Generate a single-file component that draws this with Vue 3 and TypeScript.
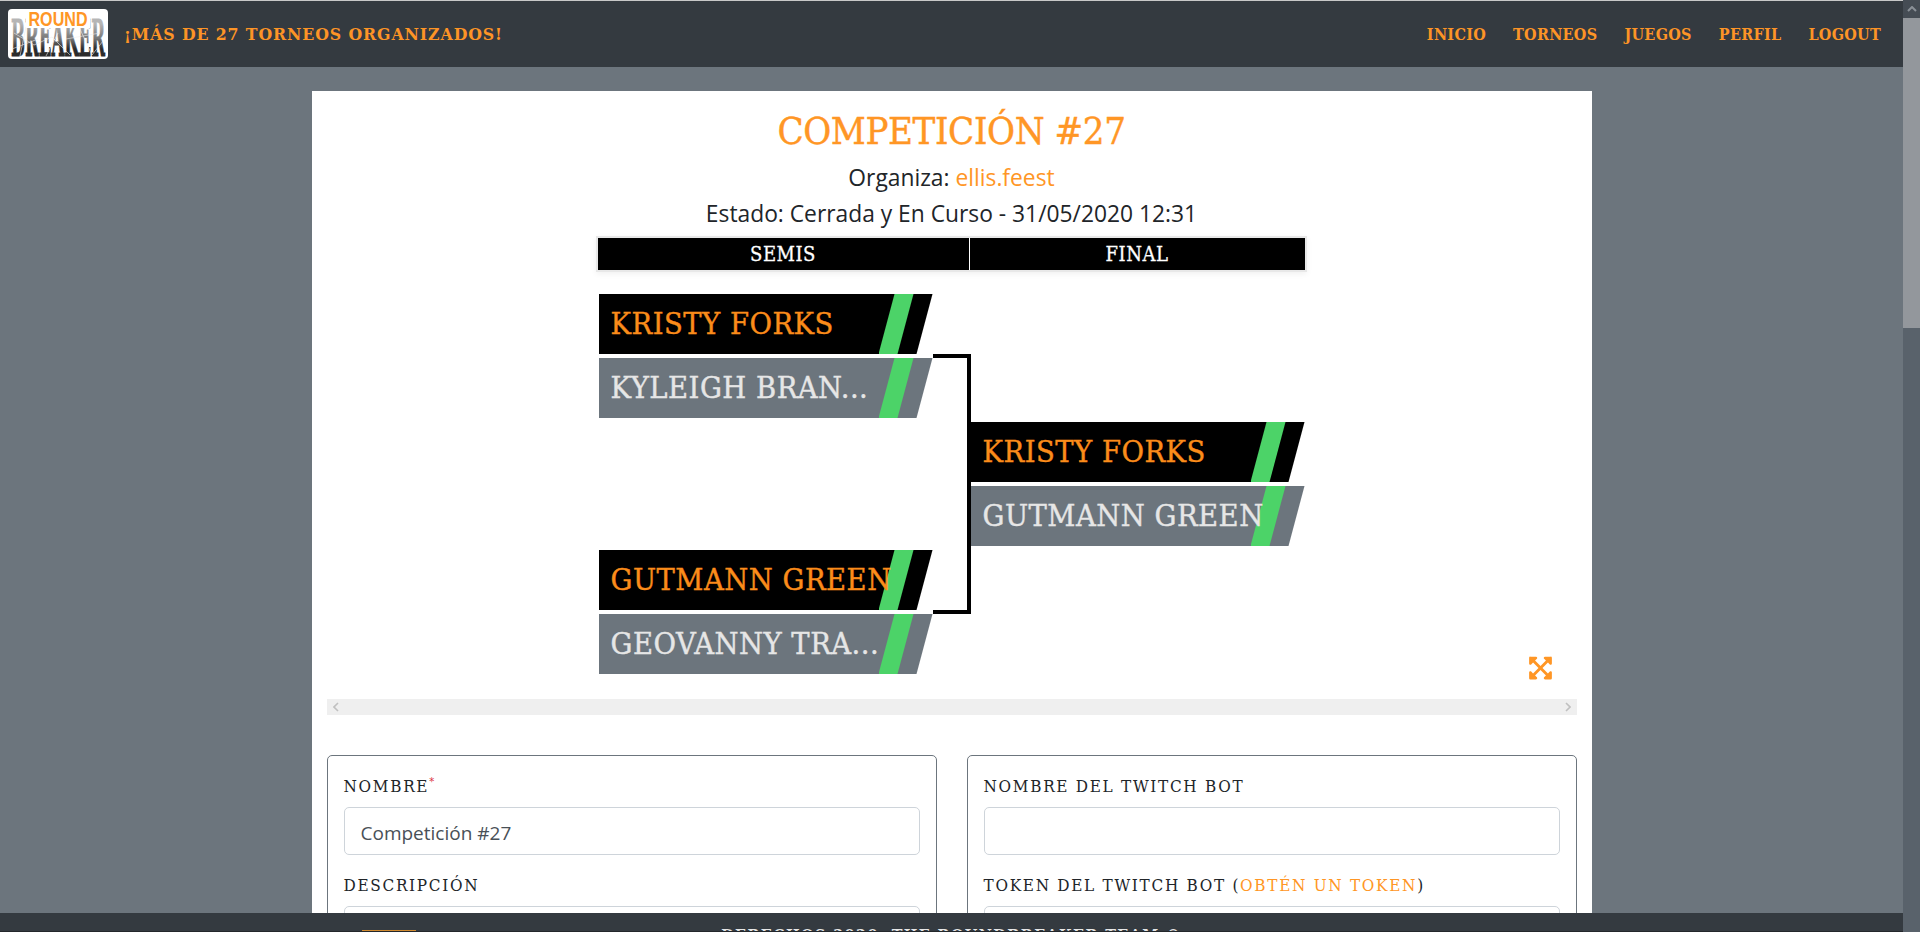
<script setup lang="ts">
interface Player {
  name: string
  winner?: boolean
}

const navItems = ['Inicio', 'Torneos', 'Juegos', 'Perfil', 'Logout']

const semis: Player[][] = [
  [{ name: 'Kristy Forks', winner: true }, { name: 'Kyleigh Bran...' }],
  [{ name: 'Gutmann Green', winner: true }, { name: 'Geovanny Tra...' }],
]

const final: Player[] = [{ name: 'Kristy Forks', winner: true }, { name: 'Gutmann Green' }]
</script>

<template>
  <div class="page">
    <header class="navbar">
      <div class="brand">
        <svg class="logo" viewBox="0 0 100 50">
          <defs>
            <linearGradient id="crack" x1="0" y1="0" x2="0" y2="1">
              <stop offset="0.25" stop-color="#b5b5b5" />
              <stop offset="0.5" stop-color="#777" />
              <stop offset="0.68" stop-color="#2a2a2a" />
              <stop offset="1" stop-color="#303030" />
            </linearGradient>
          </defs>
          <text class="logo-break" x="3" y="47" textLength="94" lengthAdjust="spacingAndGlyphs" fill="url(#crack)" stroke="url(#crack)">BREAKER</text>
          <path d="M6 24 L26 36 L44 28 L62 46 M18 18 L12 47 M50 24 L38 47 M72 20 L84 46 L95 32 M58 30 L92 24 M4 40 L30 30" stroke="#eee" stroke-width="0.6" fill="none" />
          <rect x="18" y="1" width="64" height="18" fill="#fff" />
          <text class="logo-round" x="20.5" y="17" textLength="59" lengthAdjust="spacingAndGlyphs">ROUND</text>
        </svg>
        <span class="tagline">¡Más de 27 torneos organizados!</span>
      </div>
      <nav class="nav">
        <a v-for="item in navItems" :key="item" class="nav-link">{{ item }}</a>
      </nav>
    </header>

    <main class="card">
      <h1 class="title">Competición #27</h1>
      <p class="meta">Organiza: <a class="link">ellis.feest</a></p>
      <p class="meta">Estado: Cerrada y En Curso - 31/05/2020 12:31</p>

      <section class="bracket-wrap">
        <div class="rounds">
          <div class="round-head semis-head">Semis</div>
          <div class="round-head final-head">Final</div>
        </div>
        <div class="bracket">
          <div class="col-semis">
            <div v-for="(pair, i) in semis" :key="i" class="pair">
              <div
                v-for="p in pair"
                :key="p.name"
                class="player"
                :class="{ winner: p.winner }"
              >
                <span class="player-name">{{ p.name }}</span>
                <i class="stripe"></i>
              </div>
            </div>
            <div class="connector"></div>
          </div>
          <div class="col-final">
            <div class="pair">
              <div
                v-for="p in final"
                :key="p.name"
                class="player"
                :class="{ winner: p.winner }"
              >
                <span class="player-name">{{ p.name }}</span>
                <i class="stripe"></i>
              </div>
            </div>
          </div>
        </div>
        <svg class="expand" viewBox="0 0 448 512">
          <path d="M448 344v112a23.94 23.94 0 0 1-24 24H312c-21.39 0-32.09-25.9-17-41l36.2-36.2L224 295.6 116.77 402.9 153 439c15.09 15.1 4.39 41-17 41H24a23.94 23.94 0 0 1-24-24V344c0-21.4 25.89-32.1 41-17l36.19 36.2L184.46 256 77.18 148.7 41 185c-15.1 15.1-41 4.4-41-17V56a23.94 23.94 0 0 1 24-24h112c21.39 0 32.09 25.9 17 41l-36.2 36.2L224 216.4l107.23-107.3L295 73c-15.09-15.1-4.39-41 17-41h112a23.94 23.94 0 0 1 24 24v112c0 21.4-25.89 32.1-41 17l-36.19-36.2L263.54 256l107.28 107.3L407 327.1c15.1-15.2 41-4.5 41 16.9z" />
        </svg>
        <div class="hscroll">
          <svg viewBox="0 0 6 10"><path d="M5 1 1 5l4 4" /></svg>
          <svg viewBox="0 0 6 10"><path d="M1 1l4 4-4 4" /></svg>
        </div>
      </section>

      <section class="forms">
        <div class="panel">
          <label class="field-label">Nombre<sup class="req">*</sup></label>
          <input class="input" value="Competición #27" />
          <label class="field-label">Descripción</label>
          <input class="input" />
        </div>
        <div class="panel">
          <label class="field-label">Nombre del Twitch Bot</label>
          <input class="input" />
          <label class="field-label">Token del Twitch Bot (<a class="link">Obtén un token</a>)</label>
          <input class="input" />
        </div>
      </section>
    </main>

    <footer class="footer">
      <span class="footer-badge"></span>
      <span class="footer-text">Derechos 2020. The RoundBreaker Team ©</span>
    </footer>

    <div class="vscroll">
      <div class="vscroll-btn">
        <svg viewBox="0 0 10 6"><path d="M1 5l4-4 4 4" /></svg>
      </div>
      <div class="vscroll-thumb"></div>
    </div>
  </div>
</template>

<style>
html,
body {
  margin: 0;
  height: 932px;
  overflow: hidden;
  background: #6c757d;
}
</style>

<style scoped>
.page {
  position: relative;
  height: 932px;
  overflow: hidden;
  padding-right: 17px;
  box-sizing: border-box;
  background: #6c757d;
  font-family: 'Open Sans', 'Noto Sans', sans-serif;
  color: #212529;
}

.navbar {
  height: 66px;
  margin-top: 1px;
  display: flex;
  align-items: center;
  justify-content: space-between;
  padding: 0 22px 0 8px;
  background: #343a40;
  box-shadow: 0 -1px 0 #c8c8c8;
}

.brand {
  display: flex;
  align-items: center;
  gap: 16px;
}

.logo {
  width: 100px;
  height: 50px;
  background: #fff;
  border-radius: 4px;
}

.logo-round {
  font: 700 19.5px 'Liberation Sans', sans-serif;
  fill: #ff9625;
}

.logo-break {
  font: 700 50px 'DejaVu Serif', serif;
  stroke-width: 0.8;
}

.tagline,
.nav-link {
  font-family: 'DejaVu Serif Condensed', 'DejaVu Serif', serif;
  font-stretch: condensed;
  font-weight: 700;
  text-transform: uppercase;
  color: #fd9426;
}

.tagline {
  font-size: 17.5px;
  letter-spacing: 0.9px;
}

.nav {
  display: flex;
  gap: 27px;
}

.nav-link {
  font-size: 16px;
  letter-spacing: 0.3px;
}

.card {
  width: 1280px;
  margin: 24px auto 0;
  padding: 0 15px;
  box-sizing: border-box;
  background: #fff;
  text-align: center;
  height: 900px;
}

.title {
  margin: 0 0 3px;
  padding-top: 14px;
  font-family: 'DejaVu Serif Condensed', 'DejaVu Serif', serif;
  font-stretch: condensed;
  font-size: 38px;
  font-weight: 400;
  line-height: 52px;
  letter-spacing: -0.4px;
  -webkit-text-stroke: 0.4px #ff9625;
  text-transform: uppercase;
  color: #ff9625;
}

.meta {
  margin: 0;
  font-size: 22.8px;
  line-height: 36px;
}

.link {
  color: #ff9625;
}

.bracket-wrap {
  position: relative;
  margin-top: 4px;
}

.rounds {
  display: flex;
  width: 711px;
  height: 36px;
  margin-left: 269px;
  border: 2px solid #e8e8e8;
  box-sizing: border-box;
  box-shadow: 0 2px 6px rgba(0, 0, 0, 0.06);
  gap: 1px;
  background: #fff;
}

.round-head {
  background: #000;
  color: #fff;
  font-family: 'DejaVu Serif Condensed', 'DejaVu Serif', serif;
  font-stretch: condensed;
  font-size: 20px;
  line-height: 32px;
  letter-spacing: 0.5px;
  -webkit-text-stroke: 0.3px #fff;
  text-transform: uppercase;
}

.semis-head {
  width: 371px;
}

.final-head {
  flex: 1;
}

.bracket {
  display: flex;
  margin: 22px 0 0 272px;
  height: 380px;
  gap: 38px;
  text-align: left;
}

.col-semis {
  position: relative;
  display: flex;
  flex-direction: column;
  gap: 132px;
}

.col-final {
  padding-top: 128px;
}

.pair {
  display: flex;
  flex-direction: column;
  gap: 4px;
}

.player {
  position: relative;
  width: 334px;
  height: 60px;
  padding-left: 12px;
  box-sizing: border-box;
  background: #6c757d;
  color: #e6e6e6;
  clip-path: polygon(0 0, 100% 0, 318px 100%, 0 100%);
  font-family: 'DejaVu Serif Condensed', 'DejaVu Serif', serif;
  font-stretch: condensed;
  font-size: 30.5px;
  line-height: 60px;
  letter-spacing: 0.5px;
  -webkit-text-stroke: 0.4px currentColor;
  text-transform: uppercase;
  white-space: nowrap;
  overflow: hidden;
}

.player.winner {
  background: #000;
  color: #fb8c1a;
}

.player-name {
  position: relative;
  z-index: 1;
}

.stripe {
  position: absolute;
  top: 0;
  bottom: 0;
  left: 280px;
  width: 35px;
  background: #4cd368;
  clip-path: polygon(16px 0, 100% 0, 19px 100%, 0 100%);
}

.connector {
  position: absolute;
  left: 334px;
  top: 60px;
  width: 34px;
  height: 252px;
  border: 4px solid #000;
  border-left: 0;
  box-sizing: content-box;
  background: transparent;
}

.expand {
  position: absolute;
  left: 1202px;
  top: 419px;
  width: 23px;
  height: 26px;
  fill: #ff9625;
}

.hscroll {
  display: flex;
  align-items: center;
  justify-content: space-between;
  height: 16px;
  margin-top: 25px;
  padding: 0 6px;
  background: #efefef;
}

.hscroll svg {
  width: 6px;
  height: 10px;
  fill: none;
  stroke: #c0c0c0;
  stroke-width: 1.6;
}

.forms {
  display: grid;
  grid-template-columns: 610px 610px;
  gap: 30px;
  margin-top: 40px;
  text-align: left;
}

.panel {
  display: flex;
  flex-direction: column;
  padding: 16px;
  border: 1px solid #6c757d;
  border-radius: 5px;
  height: 300px;
}

.field-label {
  padding-top: 2px;
  font-family: 'DejaVu Serif Condensed', 'DejaVu Serif', serif;
  font-stretch: condensed;
  font-size: 17px;
  line-height: 24px;
  letter-spacing: 1.7px;
  text-transform: uppercase;
  margin-bottom: 9px;
}

.req {
  color: #dc3545;
  font-size: 11px;
  line-height: 0;
}

.input {
  height: 48px;
  padding: 3px 16px 0;
  margin-bottom: 16px;
  box-sizing: border-box;
  border: 1px solid #ced4da;
  border-radius: 5px;
  font-family: inherit;
  font-size: 19px;
  color: #495057;
}

.footer {
  position: absolute;
  left: 0;
  right: 17px;
  top: 913px;
  height: 18px;
  background: #343a40;
  border-bottom: 1px solid #23272b;
  overflow: hidden;
}

.footer-badge {
  position: absolute;
  left: 362px;
  top: 17px;
  width: 54px;
  height: 1px;
  background: #d08a30;
}

.footer-text {
  position: absolute;
  left: 0;
  right: 0;
  top: 13px;
  text-align: center;
  font-family: 'DejaVu Serif Condensed', 'DejaVu Serif', serif;
  font-stretch: condensed;
  font-size: 16px;
  font-weight: 700;
  letter-spacing: 1.4px;
  text-transform: uppercase;
  color: #e6e6e6;
}

.vscroll {
  position: absolute;
  top: 0;
  right: 0;
  bottom: 0;
  width: 17px;
  background: #59626b;
}

.vscroll-btn {
  height: 18px;
  display: flex;
  align-items: center;
  justify-content: center;
  background: #454c54;
}

.vscroll-btn svg {
  width: 10px;
  height: 6px;
  fill: none;
  stroke: #8a9097;
  stroke-width: 2;
}

.vscroll-thumb {
  height: 310px;
  background: #93979c;
}
</style>
